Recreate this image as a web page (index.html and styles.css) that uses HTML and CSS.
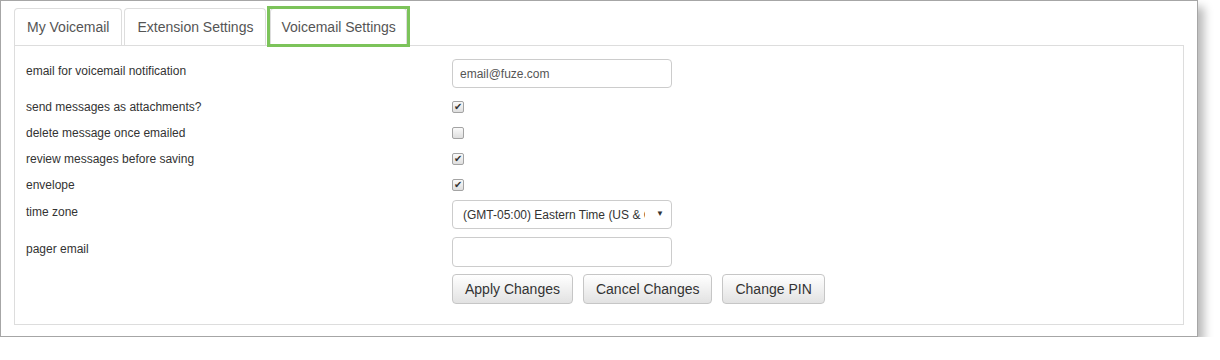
FILE: index.html
```html
<!DOCTYPE html>
<html lang="en">

<head>
    <meta charset="UTF-8">
    <meta name="viewport" content="width=device-width, initial-scale=1.0">
    <title>Voicemail Settings</title>
    <link rel="stylesheet" href="styles.css">
</head>

<body>

    <div class="window">
        <ul class="tabs">
            <li class="tab">My Voicemail</li>
            <li class="tab">Extension Settings</li>
            <li class="tab active">Voicemail Settings</li>
        </ul>

        <div class="panel">
            <div class="row">
                <label class="row-label" for="email">email for voicemail notification</label>
                <input class="field" type="text" id="email" value="email@fuze.com">
            </div>

            <div class="row check-row">
                <label class="row-label" for="attach">send messages as attachments?</label>
                <input class="check" type="checkbox" id="attach" checked>
            </div>
            <div class="row check-row">
                <label class="row-label" for="delete">delete message once emailed</label>
                <input class="check" type="checkbox" id="delete">
            </div>
            <div class="row check-row">
                <label class="row-label" for="review">review messages before saving</label>
                <input class="check" type="checkbox" id="review" checked>
            </div>
            <div class="row check-row">
                <label class="row-label" for="envelope">envelope</label>
                <input class="check" type="checkbox" id="envelope" checked>
            </div>

            <div class="row tz-row">
                <label class="row-label" for="tz">time zone</label>
                <div class="select-wrap">
                    <select class="field select" id="tz">
                        <option>(GMT-05:00) Eastern Time (US &amp; Canada)</option>
                    </select>
                    <span class="select-arrow">&#9660;</span>
                </div>
            </div>

            <div class="row">
                <label class="row-label" for="pager">pager email</label>
                <input class="field pager" type="text" id="pager">
            </div>

            <div class="row buttons-row">
                <span class="row-label"></span>
                <div class="buttons">
                    <button class="btn">Apply Changes</button>
                    <button class="btn">Cancel Changes</button>
                    <button class="btn">Change PIN</button>
                </div>
            </div>
        </div>
    </div>

</body>

</html>
```

FILE: styles.css
```css
body {
    margin: 0;
    background: #fff;
    font-family: "Liberation Sans", Arial, sans-serif;
    color: #333;
}

/* 外枠 */
.window {
    width: 1198px;
    box-sizing: border-box;
    border: 1px solid #a6a6a6;
    padding: 7px 13px 11px;
    background: #fff;
    box-shadow: 6px 7px 9px rgba(0, 0, 0, 0.28);
}

/* タブ */
.tabs {
    display: flex;
    gap: 2px;
    list-style: none;
    margin: 0;
    padding: 0;
}

.tab {
    position: relative;
    padding: 9px 12px 9px;
    font-size: 14px;
    line-height: 18px;
    color: #555;
    border: 1px solid #ddd;
    border-bottom: 0;
    border-radius: 4px 4px 0 0;
    background: #fff;
}

.tab.active {
    margin-left: 2px;
    margin-bottom: -1px;
    padding: 9px 10px 10px;
    z-index: 1;
}

/* 緑の強調枠 */
.tab.active::after {
    content: "";
    position: absolute;
    left: -4px;
    right: -4px;
    top: -3px;
    bottom: -1px;
    border: 3px solid #7cc35a;
}

/* パネル */
.panel {
    border: 1px solid #ddd;
    padding: 13px 11px 20px;
}

.row {
    display: grid;
    grid-template-columns: 426px 1fr;
    align-items: start;
}

.row-label {
    padding-top: 4px;
    font-size: 12px;
    line-height: 17px;
    color: #333;
}

.row:first-child {
    margin-bottom: 6px;
}

.check-row {
    height: 26px;
    align-items: center;
}

.check-row .row-label {
    padding-top: 0;
}

.tz-row {
    margin-top: 2px;
    margin-bottom: 8px;
}

.buttons-row {
    margin-top: 7px;
}

.field {
    width: 220px;
    height: 29px;
    box-sizing: border-box;
    padding: 0 7px;
    border: 1px solid #ccc;
    border-radius: 4px;
    font-family: "Liberation Sans", Arial, sans-serif;
    font-size: 12px;
    color: #555;
    background: #fff;
    margin: 0;
}

.pager {
    height: 30px;
}

.check {
    appearance: none;
    -webkit-appearance: none;
    width: 12px;
    height: 12px;
    margin: 0;
    border: 1px solid #a3a3a3;
    border-radius: 2px;
    background: linear-gradient(#fafafa, #dedede);
    position: relative;
}

.check:checked::after {
    content: "\2714";
    position: absolute;
    left: 1px;
    top: -2px;
    font-size: 10px;
    line-height: 14px;
    color: #333;
}

.select-wrap {
    position: relative;
    width: 220px;
}

.select {
    appearance: none;
    -webkit-appearance: none;
    padding: 0 26px 0 10px;
    color: #333;
}

.select-arrow {
    position: absolute;
    right: 8px;
    top: 9px;
    font-size: 8px;
    line-height: 10px;
    color: #333;
    pointer-events: none;
}

.buttons {
    display: flex;
    gap: 10px;
}

.btn {
    height: 30px;
    padding: 0 12px;
    border: 1px solid #c6c6c6;
    border-radius: 4px;
    background: linear-gradient(#ffffff, #e2e2e2);
    font-family: "Liberation Sans", Arial, sans-serif;
    font-size: 14px;
    color: #333;
    cursor: pointer;
}
```
